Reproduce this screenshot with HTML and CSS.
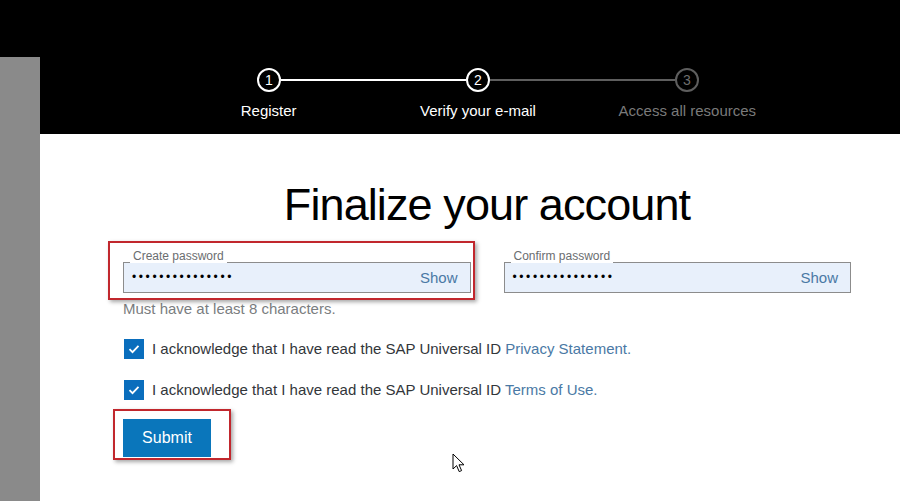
FILE: index.html
```html
<!doctype html>
<html>
  <head>
    <title>Finalize your account</title>
    <meta charset="UTF-8" />
    <link rel="stylesheet" href="styles.css">
  </head>

  <body>
    <div class="topbar"></div>
    <div class="page">
      <div class="side"></div>
      <div class="main">
        <div class="band">
          <div class="stepper">
            <div class="track">
              <span class="dot">1</span>
              <span class="line"></span>
              <span class="dot">2</span>
              <span class="line line-off"></span>
              <span class="dot dot-off">3</span>
            </div>
            <div class="labels">
              <span class="step">Register</span>
              <span class="step">Verify your e-mail</span>
              <span class="step step-off">Access all resources</span>
            </div>
          </div>
        </div>

        <div class="content">
          <h1>Finalize your account</h1>

          <div class="fields">
            <div class="col marked">
              <div class="field">
                <label class="legend">Create password</label>
                <span class="dots">•••••••••••••••</span>
                <span class="show">Show</span>
              </div>
            </div>
            <div class="col">
              <div class="field">
                <label class="legend">Confirm password</label>
                <span class="dots">•••••••••••••••</span>
                <span class="show">Show</span>
              </div>
            </div>
          </div>
          <p class="hint">Must have at least 8 characters.</p>

          <label class="check">
            <span class="box">
              <svg width="12" height="10" viewBox="0 0 12 10"><path d="M1.5 5.2l3 3 6-6.4" /></svg>
            </span>
            <span>I acknowledge that I have read the SAP Universal ID <a href="#">Privacy Statement.</a></span>
          </label>
          <label class="check">
            <span class="box">
              <svg width="12" height="10" viewBox="0 0 12 10"><path d="M1.5 5.2l3 3 6-6.4" /></svg>
            </span>
            <span>I acknowledge that I have read the SAP Universal ID <a href="#">Terms of Use.</a></span>
          </label>

          <div class="actions">
            <button class="submit">Submit</button>
          </div>
        </div>
      </div>
    </div>

    <svg class="cursor" width="13" height="20" viewBox="0 0 13 20">
      <path d="M1 1v15l3.6-3.4 2.6 6 2.4-1-2.6-5.8h5z" />
    </svg>
  </body>
</html>
```

FILE: styles.css
```css
html {
  margin: 0;
  padding: 0;
}
body {
  margin: 0;
  font: 400 15px/1.3 'Liberation Sans', Arial, sans-serif;
  color: #32363a;
  background: #ffffff;
  height: 501px;
  overflow: hidden;
  position: relative;
}
.topbar {
  height: 57px;
  background: #000000;
}
.page {
  display: flex;
  height: 444px;
}
.side {
  flex: 0 0 40px;
  background: #8a8a8a;
}
.main {
  flex: 1;
}
.band {
  height: 77px;
  background: #000000;
  padding-top: 11px;
  box-sizing: border-box;
}
.stepper {
  margin-left: 124px;
  width: 628px;
}
.track {
  display: flex;
  align-items: center;
  padding: 0 93px;
}
.dot {
  flex: 0 0 auto;
  width: 20px;
  height: 20px;
  border: 2px solid #ffffff;
  border-radius: 50%;
  color: #ffffff;
  font-size: 14px;
  line-height: 20px;
  text-align: center;
}
.dot-off {
  border-color: #5e5e5e;
  color: #6e6e6e;
}
.line {
  flex: 1;
  height: 2px;
  background: #ffffff;
}
.line-off {
  background: #5e5e5e;
}
.labels {
  display: flex;
  margin-top: 10px;
}
.step {
  flex: 1;
  text-align: center;
  color: #ffffff;
  font-size: 15px;
  line-height: 18px;
}
.step-off {
  color: #7a7a7a;
}
.content {
  width: 728px;
  margin-left: 83px;
}
h1 {
  margin: 43px 0 0 0;
  font-weight: 400;
  font-size: 45px;
  line-height: 55px;
  text-align: center;
  color: #000000;
  letter-spacing: -0.9px;
}
.fields {
  display: flex;
  gap: 33px;
  margin-top: 30px;
}
.col {
  flex: 1;
  position: relative;
}
.marked::after {
  content: '';
  position: absolute;
  left: -15px;
  right: -4px;
  top: -21px;
  bottom: -7px;
  border: 2px solid #c1272d;
  box-shadow: 2px 2px 4px rgba(0, 0, 0, 0.35);
  pointer-events: none;
}
.field {
  position: relative;
  height: 31px;
  box-sizing: border-box;
  padding: 0 12px 0 8px;
  border: 1px solid #8c8c8c;
  background: #e8f0fb;
  display: flex;
  align-items: center;
  justify-content: space-between;
}
.legend {
  position: absolute;
  left: 6px;
  top: -14px;
  padding: 0 3px;
  background: #ffffff;
  font-size: 12px;
  line-height: 14px;
  color: #6a6d70;
}
.dots {
  font-size: 12px;
  letter-spacing: 2.6px;
  color: #000000;
}
.show {
  color: #4a79a5;
  font-size: 15px;
}
.hint {
  margin: 8px 0 0 0;
  font-size: 15px;
  line-height: 16px;
  color: #7a7d80;
}
.check {
  display: flex;
  align-items: center;
  gap: 8px;
  margin-top: 22px;
  padding-left: 1px;
  height: 20px;
}
.check + .check {
  margin-top: 21px;
}
.box {
  flex: 0 0 20px;
  height: 20px;
  background: #0a6ebd;
  display: flex;
  align-items: center;
  justify-content: center;
}
.box path {
  fill: none;
  stroke: #ffffff;
  stroke-width: 1.8;
}
.check a {
  color: #4a79a5;
  text-decoration: none;
}
.actions {
  margin-top: 19px;
  position: relative;
  width: 88px;
}
.submit {
  display: block;
  width: 88px;
  height: 38px;
  border: 0;
  background: #0a76bb;
  color: #ffffff;
  font: 400 16px 'Liberation Sans', Arial, sans-serif;
  cursor: pointer;
}
.actions::after {
  content: '';
  position: absolute;
  left: -10px;
  right: -20px;
  top: -10px;
  bottom: -3px;
  border: 2px solid #c1272d;
  box-shadow: 2px 2px 4px rgba(0, 0, 0, 0.35);
  pointer-events: none;
}
.cursor {
  position: absolute;
  left: 452px;
  top: 453px;
}
.cursor path {
  fill: #ffffff;
  stroke: #000000;
  stroke-width: 1;
}
```
